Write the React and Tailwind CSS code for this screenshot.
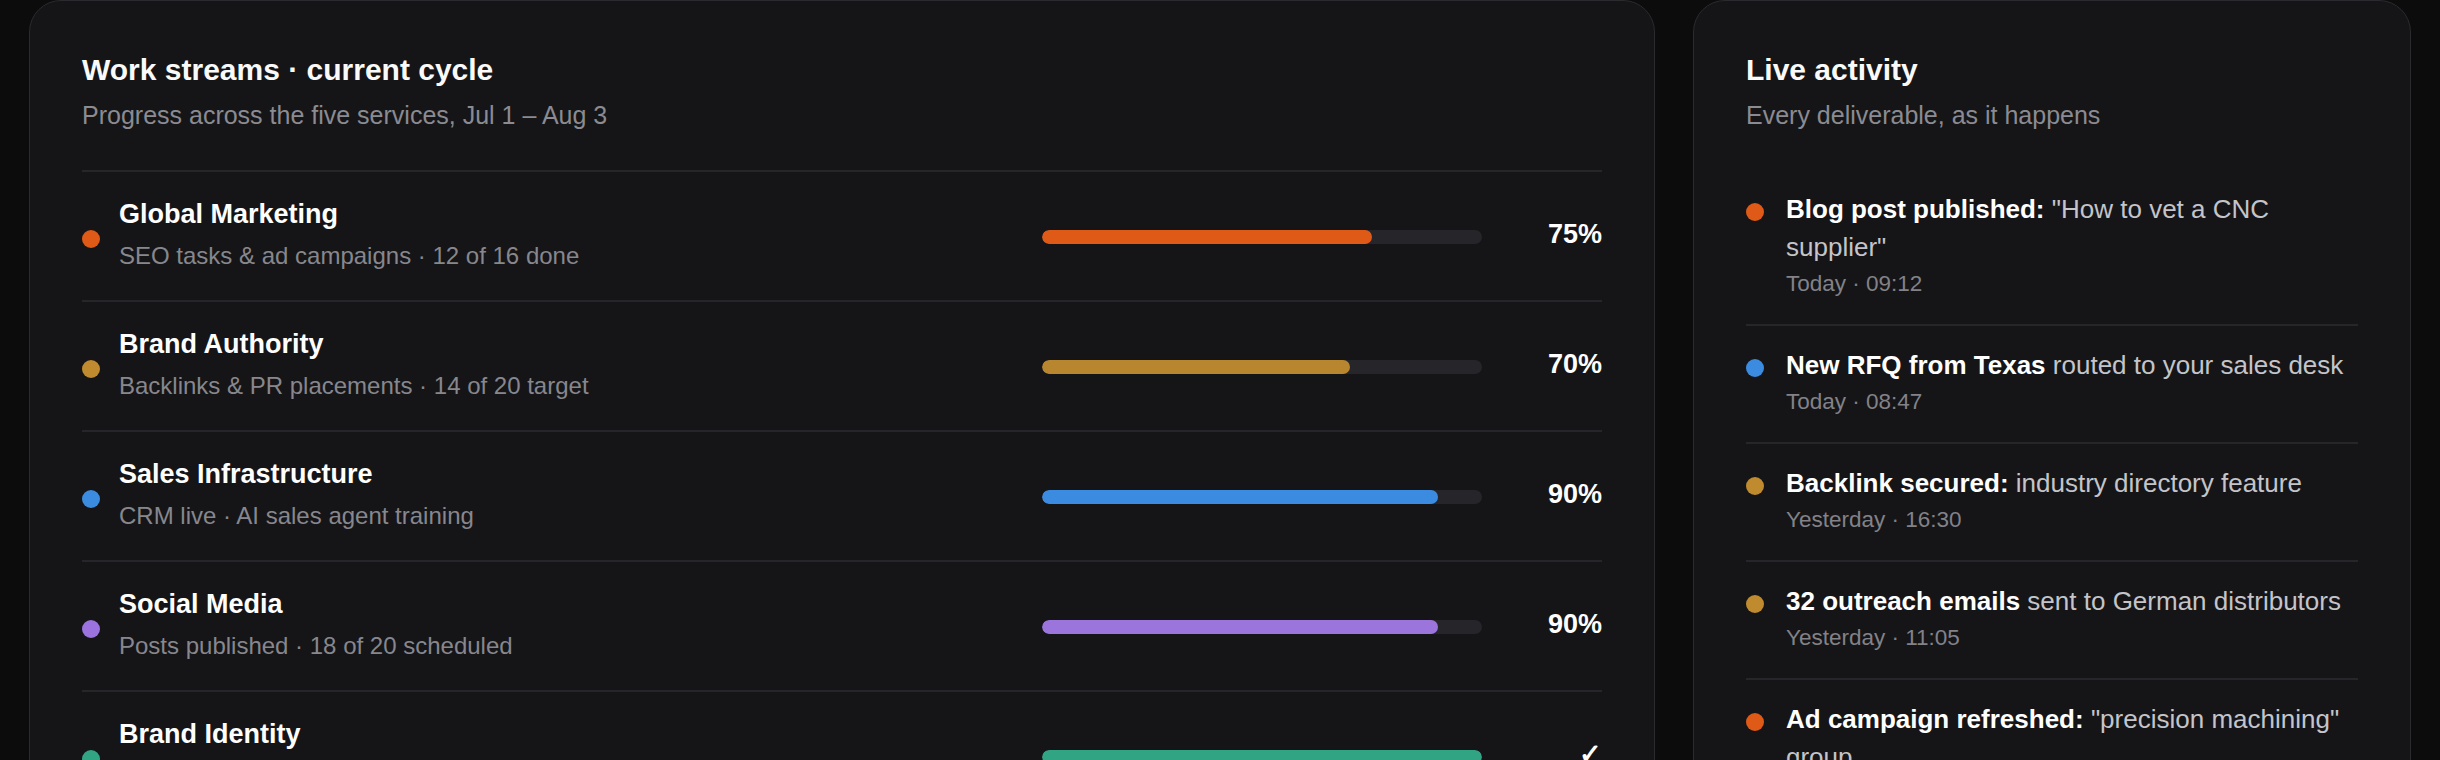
import React from "react";

const streams = [
  { name: "Global Marketing", sub: "SEO tasks & ad campaigns · 12 of 16 done", pct: 75, label: "75%", dot: "bg-[#e05a17]", bar: "bg-[#e05a17]" },
  { name: "Brand Authority", sub: "Backlinks & PR placements · 14 of 20 target", pct: 70, label: "70%", dot: "bg-[#bf8b2e]", bar: "bg-[#b8862e]" },
  { name: "Sales Infrastructure", sub: "CRM live · AI sales agent training", pct: 90, label: "90%", dot: "bg-[#3b8ce0]", bar: "bg-[#3b8ce0]" },
  { name: "Social Media", sub: "Posts published · 18 of 20 scheduled", pct: 90, label: "90%", dot: "bg-[#9b72de]", bar: "bg-[#9b74dc]" },
  { name: "Brand Identity", sub: "Logo suite & brand guidelines · delivered", pct: 100, label: "✓", dot: "bg-[#31a583]", bar: "bg-[#31a583]" },
];

const activity = [
  { dot: "bg-[#e05a17]", bold: "Blog post published:", rest: "\"How to vet a CNC supplier\"", time: "Today · 09:12" },
  { dot: "bg-[#3b8ce0]", bold: "New RFQ from Texas", rest: "routed to your sales desk", time: "Today · 08:47" },
  { dot: "bg-[#bf8b2e]", bold: "Backlink secured:", rest: "industry directory feature", time: "Yesterday · 16:30" },
  { dot: "bg-[#bf8b2e]", bold: "32 outreach emails", rest: "sent to German distributors", time: "Yesterday · 11:05" },
  { dot: "bg-[#e05a17]", bold: "Ad campaign refreshed:", rest: "\"precision machining\" group", time: "Yesterday · 09:40" },
];

function Header({ title, sub }) {
  return (
    <div className="mb-[37px]">
      <h2 className="text-[30px] leading-[33px] font-bold text-[#fafafa]">{title}</h2>
      <p className="mt-[11px] text-[25px] leading-[36px] text-[#8b8b91]">{sub}</p>
    </div>
  );
}

export default function App() {
  return (
    <div className="min-h-screen bg-[#0c0c0d] px-[29px] font-['Liberation_Sans',Arial,sans-serif]">
      <div className="grid grid-cols-[minmax(0,1fr)_718px] items-start gap-[38px]">
        <section className="rounded-[32px] border border-[#2a2a2f] bg-[#151518] p-[52px]">
          <Header title="Work streams · current cycle" sub="Progress across the five services, Jul 1 – Aug 3" />
          <div>
            {streams.map((s) => (
              <div key={s.name} className="flex items-center border-t-2 border-[#25252a] py-[26px]">
                <span className={`mt-[6px] h-[18px] w-[18px] shrink-0 rounded-full ${s.dot}`} />
                <div className="ml-[19px] min-w-0 flex-1">
                  <div className="text-[27px] leading-[32px] font-bold text-white">{s.name}</div>
                  <div className="mt-[8px] text-[24px] leading-[36px] text-[#87878d]">{s.sub}</div>
                </div>
                <div className="mt-[2px] h-[14px] w-[440px] shrink-0 overflow-hidden rounded-full bg-[#25252a]">
                  <div className={`h-full rounded-full ${s.bar}`} style={{ width: `${s.pct}%` }} />
                </div>
                <div className="mb-[4px] ml-[40px] w-[80px] shrink-0 text-right text-[27px] leading-[32px] font-bold text-white">
                  {s.label}
                </div>
              </div>
            ))}
          </div>
        </section>

        <section className="rounded-[32px] border border-[#2a2a2f] bg-[#151518] p-[52px]">
          <Header title="Live activity" sub="Every deliverable, as it happens" />
          <div>
            {activity.map((a, i) => (
              <div
                key={a.bold}
                className={`flex items-start pt-[20px] pb-[25px] ${i === 0 ? "" : "border-t-2 border-[#25252a]"}`}
              >
                <span className={`mt-[13px] h-[18px] w-[18px] shrink-0 rounded-full ${a.dot}`} />
                <div className="ml-[22px] min-w-0 flex-1">
                  <p className="text-[26px] leading-[38px] text-[#c4c4c9]">
                    <span className="font-bold text-white">{a.bold}</span> {a.rest}
                  </p>
                  <p className="mt-[3px] text-[22.5px] leading-[30px] text-[#828288]">{a.time}</p>
                </div>
              </div>
            ))}
          </div>
        </section>
      </div>
    </div>
  );
}
